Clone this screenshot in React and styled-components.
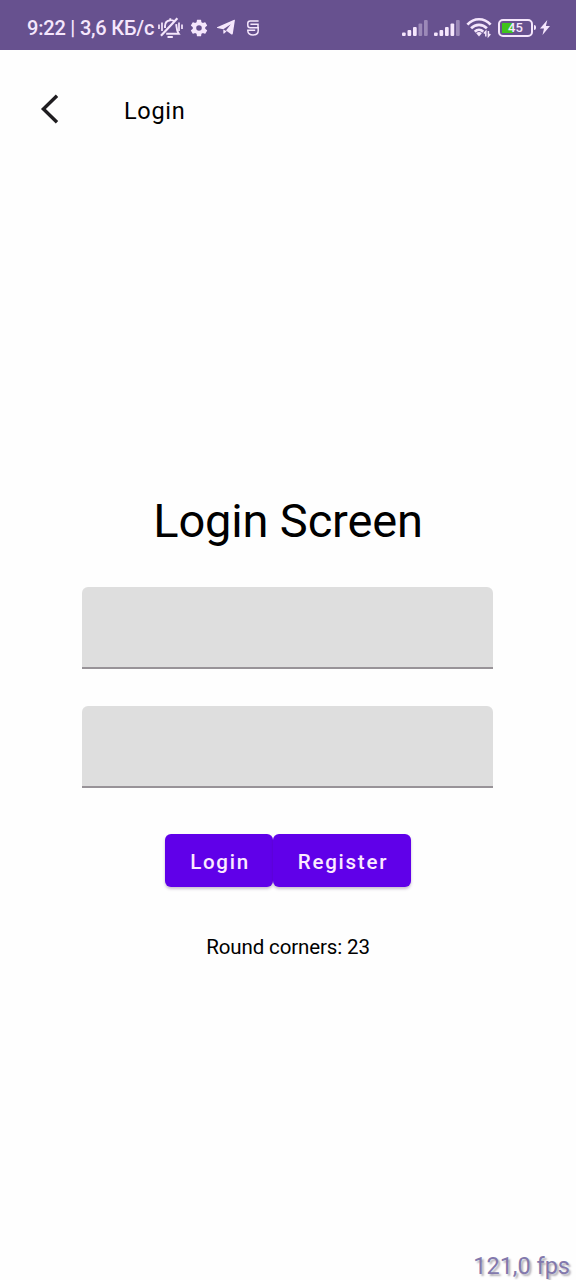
import React from "react";
import styled, { createGlobalStyle } from "styled-components";

const GlobalStyle = createGlobalStyle`
  * { box-sizing: border-box; }
  body { margin: 0; background: #fff; font-family: Roboto, "Liberation Sans", sans-serif; }
`;

const Screen = styled.div`
  display: flex;
  flex-direction: column;
  width: 576px;
  height: 1280px;
  overflow: hidden;
  background: #fefefe;
  color: #000;
`;

const StatusBar = styled.header`
  display: flex;
  align-items: center;
  justify-content: space-between;
  flex: none;
  height: 50px;
  padding: 5px 26px 0 27px;
  background: #67518f;
  color: #f5e6fc;
`;

const StatusGroup = styled.div`
  display: flex;
  align-items: center;
`;

const StatusText = styled.span`
  width: 131px;
  font-size: 20px;
  font-weight: 500;
  line-height: 24px;
  letter-spacing: -0.2px;
  white-space: nowrap;
`;

const Icon = styled.svg`
  display: block;
  flex: none;
  overflow: visible;
  margin-left: ${(p) => p.$before || 0}px;
`;

const Battery = styled.div`
  display: flex;
  align-items: center;
  margin-left: 7px;
`;

const BatteryShell = styled.div`
  display: flex;
  align-items: center;
  justify-content: center;
  width: 35px;
  height: 18px;
  border: 2px solid #f5e6fc;
  border-radius: 5px;
  background: linear-gradient(#3fc41c, #3fc41c) 2px center / 11px 10px no-repeat;
  font-size: 13px;
  font-weight: 500;
  line-height: 13px;
`;

const BatteryTip = styled.span`
  width: 2px;
  height: 5px;
  margin-left: 1px;
  border-radius: 0 2px 2px 0;
  background: #f5e6fc;
`;

const AppBar = styled.nav`
  display: flex;
  align-items: center;
  flex: none;
  height: 118px;
  padding-left: 40px;
`;

const BackButton = styled.button`
  display: flex;
  width: 84px;
  padding: 0;
  border: 0;
  background: none;
`;

const BarTitle = styled.span`
  padding-top: 3px;
  font-size: 23.5px;
  line-height: 28px;
  letter-spacing: 0.7px;
`;

const Main = styled.main`
  display: flex;
  flex-direction: column;
  align-items: center;
  flex: 1;
  padding-top: 325px;
`;

const Heading = styled.h1`
  margin: 0 0 38px;
  font-size: 47px;
  font-weight: 400;
  line-height: 56px;
  letter-spacing: -0.15px;
`;

const Field = styled.input`
  width: 411px;
  height: 82px;
  margin: 0 1px 37px 0;
  padding: 0 23px;
  border: 0;
  border-bottom: 2px solid #989398;
  border-radius: 6px 6px 0 0;
  background: #dedede;
  font: inherit;
  font-size: 23px;
  outline: none;
`;

const Actions = styled.div`
  display: flex;
  margin-top: 9px;
`;

const Button = styled.button`
  width: ${(p) => p.$width}px;
  height: 53px;
  padding: 2px 0 0 2px;
  border: 0;
  border-radius: 6px;
  background: #6000e9;
  box-shadow: 0 2px 3px rgba(70, 30, 90, 0.28);
  color: #fbeaff;
  font-family: inherit;
  font-size: 20.5px;
  font-weight: 500;
  letter-spacing: 1.75px;
`;

const Note = styled.p`
  margin: 48px 0 0;
  font-size: 20.5px;
  line-height: 24px;
  letter-spacing: -0.13px;
`;

const FrameRate = styled.footer`
  flex: none;
  padding: 0 6px 0 0;
  color: #8278ac;
  font-size: 23.5px;
  line-height: 28px;
  text-align: right;
  text-shadow: 2px 2px 2px rgba(60, 50, 70, 0.4);
`;

function MutedBell() {
  return (
    <Icon width="25" height="22" viewBox="0 0 25 22" fill="none" stroke="currentColor" strokeWidth="1.9">
      <path d="M7 11V9.2C7 5.8 9 3.6 12.3 3.2C13.9 3 15.2 3.5 16.2 4.3M18.2 7.2C18.6 9.6 18.2 13.2 20.8 16.8H8.2M12.3 3V1.2" />
      <path d="M3 18.8L19.4 1.3" strokeWidth="2.2" />
      <path d="M9.5 20H14.8" strokeWidth="2" />
      <path d="M1 7.5V12M4 5.5V14M21 5.5V14M24 7.5V12" strokeWidth="1.7" />
    </Icon>
  );
}

function Gear() {
  return (
    <Icon width="20" height="20" viewBox="2 2 20 20" fill="currentColor" $before={6}>
      <path d="M19.14 12.94c.04-.3.06-.61.06-.94s-.02-.64-.07-.94l2.03-1.58a.49.49 0 0 0 .12-.61l-1.92-3.32a.49.49 0 0 0-.59-.22l-2.39.96a7 7 0 0 0-1.62-.94l-.36-2.54a.48.48 0 0 0-.48-.41h-3.84a.47.47 0 0 0-.47.41l-.36 2.54a7.4 7.4 0 0 0-1.62.94l-2.39-.96a.48.48 0 0 0-.59.22L2.74 8.87a.48.48 0 0 0 .12.61l2.03 1.58a7 7 0 0 0 0 1.88l-2.03 1.58a.49.49 0 0 0-.12.61l1.92 3.32c.12.22.37.29.59.22l2.39-.96c.5.38 1.03.7 1.62.94l.36 2.54c.05.24.24.41.48.41h3.84c.24 0 .44-.17.47-.41l.36-2.54a7.1 7.1 0 0 0 1.62-.94l2.39.96c.22.08.47 0 .59-.22l1.92-3.32a.47.47 0 0 0-.12-.61zM12 15.2a3.2 3.2 0 1 1 0-6.4 3.2 3.2 0 0 1 0 6.4" transform="translate(12 12) scale(.87) translate(-12 -12)" />
    </Icon>
  );
}

function PaperPlane() {
  return (
    <Icon width="18" height="17" viewBox="0 0 18 17" fill="currentColor" $before={8}>
      <path d="M0 8.3L17.2 .7C17.8.5 18 .8 17.9 1.3L15.8 14.8C15.7 15.6 15.1 15.8 14.5 15.4L9 11.5L13.8 5.2L6.3 10.2L.3 9C-.1 8.9-.1 8.5 0 8.3z" />
      <path d="M6.3 10.6L9.6 12.2L7.5 14.3C6.9 14.9 6.4 14.7 6.3 14z" />
    </Icon>
  );
}

function SLogo() {
  return (
    <Icon width="12" height="16" viewBox="0 0 12 16" fill="none" stroke="currentColor" strokeWidth="1.5" $before={12}>
      <path d="M11.6 .9H3.2C1.6.9.8 1.8.8 3.2V5.2C.8 6.9 1.6 7.7 3.2 7.7H11.2V10.8C11.2 13.4 9 15 6 15S.8 13.4.8 10.8V10.3H8.2" />
      <path d="M3.4 4.3H11V7.7" strokeWidth="1.5" />
    </Icon>
  );
}

const BARS = [3.5, 6, 9, 12.5, 16];

function Signal({ active, before }) {
  return (
    <Icon width="26" height="16" viewBox="0 0 26 16" fill="currentColor" $before={before}>
      {BARS.map((h, i) => (
        <rect key={h} x={i * 5.5} y={16 - h} width="3.7" height={h} rx="1" opacity={i < active ? 1 : 0.38} />
      ))}
    </Icon>
  );
}

function Wifi() {
  return (
    <Icon width="24" height="19" viewBox="0 0 24 19" fill="none" stroke="currentColor" strokeWidth="2.7" $before={7}>
      <path d="M.4 6.7C7-.6 17-.6 23.6 6.7M4.1 10.3C8.6 5.6 15.4 5.6 19.9 10.3M7.8 13.7C10.3 11.2 13.7 11.2 16.2 13.7" />
      <path d="M9.2 15.3Q12 12.8 14.8 15.3L12 18.4z" fill="currentColor" stroke="none" />
      <path d="M18.8 18.6V13.4L16.9 15.6M21.4 13V18.2L23.3 16" strokeWidth="1.5" />
    </Icon>
  );
}

function Bolt() {
  return (
    <Icon width="10" height="15" viewBox="0 0 10 15" fill="currentColor" $before={4}>
      <path d="M7.3 0L0 8.5H4L2.5 15L10 6.1H5.9z" />
    </Icon>
  );
}

export default function App() {
  return (
    <>
      <GlobalStyle />
      <Screen>
        <StatusBar>
          <StatusGroup>
            <StatusText>9:22 | 3,6 КБ/с</StatusText>
            <MutedBell />
            <Gear />
            <PaperPlane />
            <SLogo />
          </StatusGroup>
          <StatusGroup>
            <Signal active={3} />
            <Signal active={4} before={6} />
            <Wifi />
            <Battery>
              <BatteryShell>45</BatteryShell>
              <BatteryTip />
            </Battery>
            <Bolt />
          </StatusGroup>
        </StatusBar>
        <AppBar>
          <BackButton aria-label="Back">
            <Icon width="20" height="30" viewBox="0 0 20 30" fill="none" stroke="#1f1d20" strokeWidth="3.4">
              <path d="M17 1.8L3.4 15L17 28.2" />
            </Icon>
          </BackButton>
          <BarTitle>Login</BarTitle>
        </AppBar>
        <Main>
          <Heading>Login Screen</Heading>
          <Field aria-label="Username" />
          <Field aria-label="Password" type="password" />
          <Actions>
            <Button $width={108}>Login</Button>
            <Button $width={138}>Register</Button>
          </Actions>
          <Note>Round corners: 23</Note>
        </Main>
        <FrameRate>121,0 fps</FrameRate>
      </Screen>
    </>
  );
}
